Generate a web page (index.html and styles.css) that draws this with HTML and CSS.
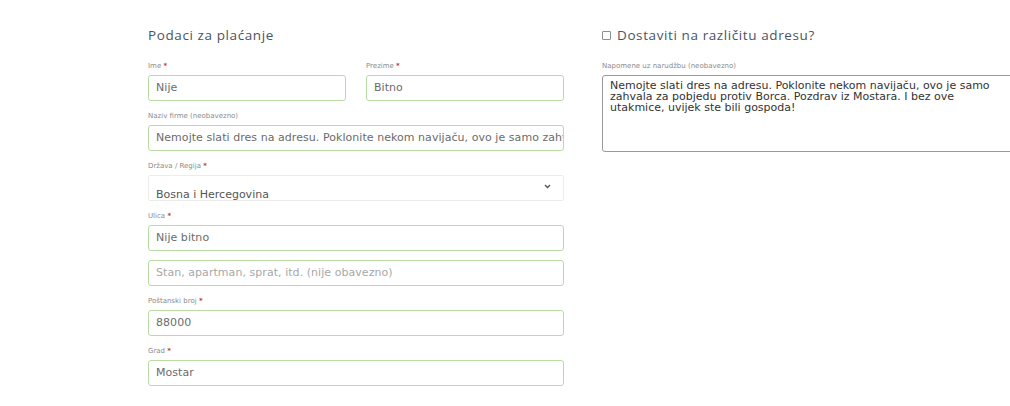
FILE: index.html
```html
<!DOCTYPE html>
<html lang="bs">
<head>
<meta charset="UTF-8">
<meta name="viewport" content="width=device-width, initial-scale=1.0">
<title>Podaci za plaćanje</title>
<link rel="stylesheet" href="styles.css">
</head>
<body>
<div class="checkout">
    <div class="billing">
        <h3 class="section-title">Podaci za plaćanje</h3>

        <div class="row">
            <div class="field">
                <label>Ime <span class="req">*</span></label>
                <div class="input">Nije</div>
            </div>
            <div class="field">
                <label>Prezime <span class="req">*</span></label>
                <div class="input">Bitno</div>
            </div>
        </div>

        <div class="field">
            <label>Naziv firme (neobavezno)</label>
            <div class="input">Nemojte slati dres na adresu. Poklonite nekom navijaču, ovo je samo zahvala za pobjedu protiv Borca.</div>
        </div>

        <div class="field">
            <label>Država / Regija <span class="req">*</span></label>
            <div class="select">
                <span>Bosna i Hercegovina</span>
                <svg class="chevron" width="7" height="5" viewBox="0 0 7 5"><path d="M1 1l2.5 2.5L6 1" fill="none" stroke="#555" stroke-width="1.4"/></svg>
            </div>
        </div>

        <div class="field">
            <label>Ulica <span class="req">*</span></label>
            <div class="input">Nije bitno</div>
            <div class="input placeholder">Stan, apartman, sprat, itd. (nije obavezno)</div>
        </div>

        <div class="field">
            <label>Poštanski broj <span class="req">*</span></label>
            <div class="input">88000</div>
        </div>

        <div class="field">
            <label>Grad <span class="req">*</span></label>
            <div class="input">Mostar</div>
        </div>
    </div>

    <div class="shipping">
        <h3 class="section-title"><span class="checkbox"></span>Dostaviti na različitu adresu?</h3>
        <div class="field">
            <label>Napomene uz narudžbu (neobavezno)</label>
            <div class="notes">Nemojte slati dres na adresu. Poklonite nekom navijaču, ovo je samo zahvala za pobjedu protiv Borca. Pozdrav iz Mostara. I bez ove utakmice, uvijek ste bili gospoda!</div>
        </div>
    </div>
</div>
</body>
</html>
```

FILE: styles.css
```css
body {
    margin: 0;
    background-color: #fff;
    font-family: 'DejaVu Sans', sans-serif;
    overflow: hidden;
}
.checkout {
    display: flex;
    gap: 38px;
    padding: 27px 0 0 148px;
}
.billing {
    width: 416px;
    flex-shrink: 0;
}
.shipping {
    width: 440px;
    flex-shrink: 0;
}
.section-title {
    margin: 0 0 18px 0;
    font-family: 'Open Sans', sans-serif;
    font-size: 13.5px;
    font-weight: 400;
    letter-spacing: 0.6px;
    color: #4b5563;
    line-height: 17px;
    display: flex;
    align-items: center;
}
.checkbox {
    width: 7px;
    height: 7px;
    border: 1px solid #8a8f96;
    border-radius: 1px;
    margin-right: 6px;
}
.row {
    display: flex;
    gap: 20px;
}
.row .field {
    flex: 1;
}
.field {
    margin-bottom: 11px;
}
.field label {
    display: block;
    font-size: 7px;
    line-height: 9px;
    color: #8a8a8a;
    margin-bottom: 4px;
}
.req {
    color: #c0392b;
    font-weight: bold;
}
.input {
    height: 24px;
    border: 1px solid #b9dca5;
    border-radius: 3px;
    padding: 0 7px;
    font-size: 11px;
    letter-spacing: 0.05px;
    line-height: 24px;
    color: #6b6b6b;
    white-space: nowrap;
    overflow: hidden;
}
.input + .input {
    margin-top: 9px;
}
.placeholder {
    color: #a8a8a8;
}
.select {
    height: 24px;
    border: 1px solid #ececec;
    border-radius: 2px;
    padding: 0 12px 0 7px;
    display: flex;
    justify-content: space-between;
    align-items: flex-start;
    font-size: 11px;
    color: #555;
    overflow: hidden;
}
.select span {
    padding-top: 12px;
    line-height: 13px;
}
.chevron {
    margin-top: 8px;
}
.notes {
    height: 67px;
    border: 1px solid #999;
    border-radius: 3px;
    padding: 4px 40px 4px 7px;
    font-size: 11px;
    line-height: 11px;
    color: #333;
}
```
